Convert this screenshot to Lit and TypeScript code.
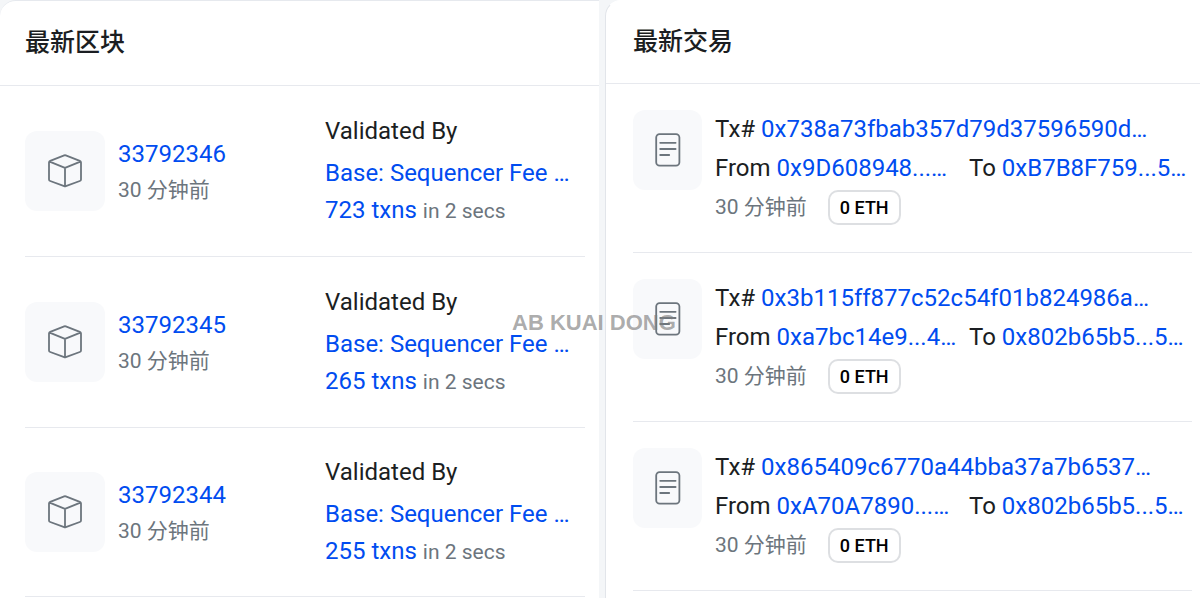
import { LitElement, html, css } from "lit";
import { customElement } from "lit/decorators.js";

interface Block {
  height: string;
  txns: number;
}

interface Tx {
  hash: string;
  from: string;
  to: string;
}

const blocks: Block[] = [
  { height: "33792346", txns: 723 },
  { height: "33792345", txns: 265 },
  { height: "33792344", txns: 255 },
];

const txs: Tx[] = [
  { hash: "0x738a73fbab357d79d37596590d…", from: "0x9D608948...…", to: "0xB7B8F759...5…" },
  { hash: "0x3b115ff877c52c54f01b824986a…", from: "0xa7bc14e9...4…", to: "0x802b65b5...5…" },
  { hash: "0x865409c6770a44bba37a7b6537…", from: "0xA70A7890...…", to: "0x802b65b5...5…" },
];

const cubeIcon = html`<svg class="icon" viewBox="0 0 34 34" aria-hidden="true">
  <path d="M16.2 1.4Q17 1.1 17.8 1.4L31.8 6.8Q33 7.3 33 8.4V25.4Q33 26.6 31.8 27L17.8 32.2Q17 32.5 16.2 32.2L2.2 27Q1 26.6 1 25.4V8.4Q1 7.3 2.2 6.8ZM1.6 7.6 17 13.8 32.4 7.6M17 13.8V32.2" />
</svg>`;

const fileIcon = html`<svg class="icon" viewBox="0 0 34 34" aria-hidden="true">
  <rect x="5.2" y="1.2" width="23.2" height="31.4" rx="3.4" />
  <path d="M9.2 9.8H24.6M9.2 16H24.6M9.2 22H18.2" stroke-linecap="round" />
</svg>`;

@customElement("app-root")
export class AppRoot extends LitElement {
  static styles = css`
    :host {
      display: block;
      position: relative;
      min-height: 100vh;
      overflow: hidden;
      background: #f4f6f8;
      color: #1b1e22;
      font: 24px/36px Roboto, "Noto Sans CJK SC", sans-serif;
    }
    * {
      box-sizing: border-box;
    }
    .board {
      display: grid;
      grid-template-columns: minmax(0, 599fr) minmax(0, 595fr);
      gap: 6px;
      min-height: 100vh;
    }
    .card {
      background: #fff;
      border-top: 1px solid #e6e9ee;
      border-top-left-radius: 16px;
    }
    .card.txs {
      border-top-color: #fff;
      border-left: 1px solid #e2e5ea;
    }
    .title {
      margin: 0;
      padding: 24px 25px;
      border-bottom: 1px solid #e7e9ee;
      font-size: 25px;
      line-height: 36px;
      font-weight: 500;
    }
    .txs .title {
      padding: 23px 27px;
    }
    .list {
      list-style: none;
      margin: 0;
      padding: 0 14px 0 25px;
    }
    .txs .list {
      padding: 0 8px 0 27px;
    }
    .row {
      display: flex;
      align-items: center;
      gap: 13px;
      padding: 27px 0;
      border-bottom: 1px solid #e7e9ee;
    }
    .blocks .row:last-child {
      padding: 26px 0;
    }
    .txs .row {
      align-items: flex-start;
      padding: 26px 0 25px;
    }
    .tile {
      display: flex;
      flex: none;
      align-items: center;
      justify-content: center;
      width: 80px;
      height: 80px;
      border-radius: 12px;
      background: #f8f9fb;
    }
    .txs .tile {
      width: 69px;
    }
    .icon {
      width: 34px;
      height: 34px;
      fill: none;
      stroke: #6c757d;
      stroke-width: 1.8;
      stroke-linejoin: round;
    }
    .summary {
      flex: 1;
      min-width: 0;
      padding-top: 2px;
    }
    .detail {
      flex: 0 0 260px;
      min-width: 0;
      line-height: 37px;
      white-space: nowrap;
    }
    .label {
      margin-bottom: 5px;
    }
    a {
      color: #004cf0;
      text-decoration: none;
    }
    .muted {
      color: #6c757d;
      font-size: 21px;
    }
    .detail .muted {
      line-height: 24px;
    }
    .info {
      flex: 1;
      min-width: 0;
      line-height: 39px;
      white-space: nowrap;
    }
    .parties {
      display: flex;
    }
    .party-from {
      flex: 0 0 254px;
    }
    .meta {
      display: flex;
      align-items: center;
      gap: 21px;
    }
    .badge {
      padding: 0 10px;
      border: 2px solid #dddfe2;
      border-radius: 10px;
      color: #000;
      font-size: 18px;
      line-height: 31px;
      font-weight: 500;
    }
    .watermark {
      position: absolute;
      left: 50%;
      top: 310px;
      transform: translateX(-88px);
      color: rgba(125, 125, 125, 0.65);
      font: bold 22px/26px "Liberation Sans", sans-serif;
      white-space: nowrap;
      pointer-events: none;
    }
  `;

  render() {
    return html`
      <main class="board">
        <section class="card blocks">
          <h2 class="title">最新区块</h2>
          <ul class="list">
            ${blocks.map(
              (b) => html`<li class="row">
                <span class="tile">${cubeIcon}</span>
                <div class="summary">
                  <div><a href="#">${b.height}</a></div>
                  <div class="muted">30 分钟前</div>
                </div>
                <div class="detail">
                  <div class="label">Validated By</div>
                  <div><a href="#">Base: Sequencer Fee …</a></div>
                  <div><a href="#">${b.txns} txns</a> <span class="muted">in 2 secs</span></div>
                </div>
              </li>`
            )}
          </ul>
        </section>
        <section class="card txs">
          <h2 class="title">最新交易</h2>
          <ul class="list">
            ${txs.map(
              (t) => html`<li class="row">
                <span class="tile">${fileIcon}</span>
                <div class="info">
                  <div>Tx# <a href="#">${t.hash}</a></div>
                  <div class="parties">
                    <span class="party-from">From <a href="#">${t.from}</a></span>
                    <span>To <a href="#">${t.to}</a></span>
                  </div>
                  <div class="meta">
                    <span class="muted">30 分钟前</span>
                    <span class="badge">0 ETH</span>
                  </div>
                </div>
              </li>`
            )}
          </ul>
        </section>
      </main>
      <div class="watermark">AB KUAI DONG</div>
    `;
  }
}
